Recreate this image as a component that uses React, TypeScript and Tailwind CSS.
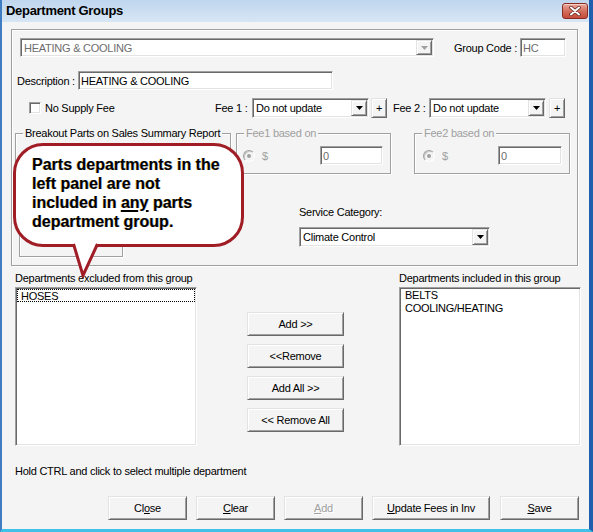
import React from 'react';

const sunken =
  'bg-white border border-t-[#a0a0a0] border-l-[#a0a0a0] border-b-white border-r-white shadow-[inset_1px_1px_0_#696969,inset_-1px_-1px_0_#e3e3e3]';
const raised =
  'bg-[#f4f4f4] border border-t-[#e3e3e3] border-l-[#e3e3e3] border-r-[#696969] border-b-[#696969] shadow-[inset_1px_1px_0_#fff,inset_-1px_-1px_0_#a0a0a0]';
const etched = 'border border-[#a0a0a0] shadow-[1px_1px_0_#fff,inset_1px_1px_0_#fff]';

function ArrowBtn({ disabled }: { disabled?: boolean }) {
  return (
    <div className={`w-[16px] h-full shrink-0 flex items-center justify-center ${raised}`}>
      <svg width="7" height="4" viewBox="0 0 7 4">
        <path d="M0 0h7L3.5 4z" fill={disabled ? '#a0a0a0' : '#000'} />
      </svg>
    </div>
  );
}

function Combo({ value, className, disabled }: { value: string; className: string; disabled?: boolean }) {
  return (
    <div className={`h-full flex p-px ${sunken} ${className}`}>
      <div className={`flex-1 pl-[2px] flex items-center whitespace-nowrap overflow-hidden ${disabled ? 'text-[#6d6d6d]' : 'text-black'}`}>
        {value}
      </div>
      <ArrowBtn disabled={disabled} />
    </div>
  );
}

function Field({ value, className, muted }: { value: string; className: string; muted?: boolean }) {
  return (
    <div className={`flex items-center pl-[2px] whitespace-nowrap ${sunken} ${className} ${muted ? 'text-[#6d6d6d]' : 'text-black'}`}>
      {value}
    </div>
  );
}

function Radio() {
  return (
    <div className="w-[12px] h-[12px] shrink-0 rounded-full border border-t-[#a0a0a0] border-l-[#a0a0a0] border-r-white border-b-white bg-[#f4f4f4] flex items-center justify-center shadow-[inset_1px_1px_0_#c8c8c8]">
      <div className="w-[4px] h-[4px] rounded-full bg-[#a0a0a0]" />
    </div>
  );
}

function GroupTitle({ children, gray }: { children: React.ReactNode; gray?: boolean }) {
  return (
    <span className={`absolute left-[7px] -top-[8px] px-[2px] bg-[#f4f4f4] whitespace-nowrap ${gray ? 'text-[#a0a0a0]' : 'text-black'}`}>
      {children}
    </span>
  );
}

function Btn({ children, className, disabled }: { children: React.ReactNode; className: string; disabled?: boolean }) {
  return (
    <div
      className={`h-[24px] flex items-center justify-center whitespace-nowrap ${raised} ${className} ${
        disabled ? 'text-[#a0a0a0] [text-shadow:1px_1px_0_#fff]' : 'text-black'
      }`}
    >
      {children}
    </div>
  );
}

function CloseBox() {
  return (
    <div className="w-[26px] h-[16px] rounded-[3px] border border-[#8b2b22] bg-gradient-to-b from-[#e9a99b] via-[#d46f5e] to-[#c44a3a] flex items-center justify-center shadow-[inset_0_1px_0_#f5cfc6]">
      <svg width="12" height="10" viewBox="0 0 12 10">
        <path d="M2 1.5l8 7M10 1.5l-8 7" stroke="#5a1d18" strokeWidth="3.4" strokeLinecap="round" />
        <path d="M2 1.5l8 7M10 1.5l-8 7" stroke="#fff" strokeWidth="2" strokeLinecap="round" />
      </svg>
    </div>
  );
}

export default function App() {
  return (
    <div className="relative w-[593px] h-[532px] overflow-hidden flex flex-col bg-[#f4f4f4] border-l-2 border-l-[#3f7cc2] border-r-[4px] border-r-[#1f5fae] border-b-[3px] border-b-[#3fc1ea] font-['Liberation_Sans',Arial,sans-serif] text-[11px] leading-[14px] tracking-[-0.25px] text-black">
      {/* title bar */}
      <div className="h-[22px] shrink-0 flex items-center justify-between pl-[4px] pr-[1px] bg-gradient-to-b from-[#bfd6ee] to-[#d7e6f5]">
        <span className="text-[13px] font-bold tracking-[-0.3px] text-black">Department Groups</span>
        <CloseBox />
      </div>

      {/* main frame */}
      <div className={`ml-[9px] mt-[7px] w-[567px] h-[237px] shrink-0 flex flex-col ${etched}`}>
        {/* row 1 */}
        <div className="mt-[8px] h-[19px] flex items-stretch">
          <Combo value="HEATING & COOLING" className="ml-[8px] w-[414px]" disabled />
          <div className="w-[86px] pr-[3px] flex items-center justify-end whitespace-nowrap">Group Code :</div>
          <Field value="HC" className="w-[46px]" muted />
        </div>

        {/* row 2 */}
        <div className="mt-[14px] h-[19px] flex items-stretch">
          <div className="ml-[5px] w-[61px] flex items-center whitespace-nowrap">Description :</div>
          <Field value="HEATING & COOLING" className="w-[255px]" />
        </div>

        {/* row 3 */}
        <div className="mt-[8px] h-[20px] flex items-stretch">
          <div className="w-[203px] flex items-center">
            <div className={`ml-[17px] w-[12px] h-[12px] ${sunken}`} />
            <span className="ml-[4px] whitespace-nowrap">No Supply Fee</span>
          </div>
          <div className="w-[37px] flex items-center whitespace-nowrap">Fee 1 :</div>
          <Combo value="Do not update" className="w-[117px]" />
          <Btn className="ml-[2px] w-[16px] !h-[20px]">+</Btn>
          <div className="ml-[6px] w-[36px] flex items-center whitespace-nowrap">Fee 2 :</div>
          <Combo value="Do not update" className="w-[117px]" />
          <Btn className="ml-[3px] w-[16px] !h-[20px]">+</Btn>
        </div>

        {/* row 4 */}
        <div className="mt-[15px] flex items-start">
          <div className="flex flex-col">
            <div className={`relative ml-[3px] w-[216px] h-[92px] ${etched}`}>
              <GroupTitle>Breakout Parts on Sales Summary Report</GroupTitle>
            </div>
            <div className={`ml-[7px] mt-[5px] w-[104px] h-[27px] ${etched}`} />
          </div>

          <div className="flex flex-col">
            <div className="flex">
              <div className={`relative ml-[5px] w-[155px] h-[41px] ${etched}`}>
                <GroupTitle gray>Fee1 based on</GroupTitle>
                <div className="mt-[12px] h-[19px] flex items-center">
                  <div className="ml-[6px]">
                    <Radio />
                  </div>
                  <span className="ml-[7px] text-[#a0a0a0]">$</span>
                  <Field value="0" className="ml-auto mr-[7px] w-[63px] h-[19px]" muted />
                </div>
              </div>
              <div className={`relative ml-[23px] w-[156px] h-[41px] ${etched}`}>
                <GroupTitle gray>Fee2 based on</GroupTitle>
                <div className="mt-[12px] h-[19px] flex items-center">
                  <div className="ml-[8px]">
                    <Radio />
                  </div>
                  <span className="ml-[7px] text-[#a0a0a0]">$</span>
                  <Field value="0" className="ml-auto mr-[7px] w-[64px] h-[19px]" muted />
                </div>
              </div>
            </div>
            <div className="ml-[68px] mt-[31px] h-[14px] whitespace-nowrap">Service Category:</div>
            <div className="ml-[68px] mt-[8px] h-[20px] flex">
              <Combo value="Climate Control" className="w-[191px]" />
            </div>
          </div>
        </div>
      </div>

      {/* lists */}
      <div className="mt-[5px] flex items-start">
        <div className="ml-[13px] w-[182px] flex flex-col">
          <div className="h-[14px] whitespace-nowrap">Departments excluded from this group</div>
          <div className={`mt-[2px] h-[159px] p-[1px] ${sunken}`}>
            <div className="h-[13px] leading-[12px] pl-[3px] border border-dotted border-black whitespace-nowrap">HOSES</div>
          </div>
        </div>

        <div className="ml-[50px] pt-[41px] w-[97px] flex flex-col gap-[8px]">
          <Btn className="w-[97px]">Add &gt;&gt;</Btn>
          <Btn className="w-[97px]">&lt;&lt;Remove</Btn>
          <Btn className="w-[97px]">Add All &gt;&gt;</Btn>
          <Btn className="w-[97px]">&lt;&lt; Remove All</Btn>
        </div>

        <div className="ml-[55px] w-[182px] flex flex-col">
          <div className="h-[14px] whitespace-nowrap">Departments included in this group</div>
          <div className={`mt-[2px] h-[159px] p-[1px] ${sunken}`}>
            <div className="h-[13px] leading-[13px] pl-[4px] whitespace-nowrap">BELTS</div>
            <div className="h-[13px] leading-[13px] pl-[4px] whitespace-nowrap">COOLING/HEATING</div>
          </div>
        </div>
      </div>

      <div className="ml-[13px] mt-[18px] h-[14px] whitespace-nowrap">Hold CTRL and click to select multiple department</div>

      {/* bottom buttons */}
      <div className="mt-[18px] flex">
        <Btn className="ml-[106px] w-[79px]">
          Cl<u>o</u>se
        </Btn>
        <Btn className="ml-[9px] w-[79px]">
          <u>C</u>lear
        </Btn>
        <Btn className="ml-[9px] w-[79px]" disabled>
          <u>A</u>dd
        </Btn>
        <Btn className="ml-[9px] w-[118px]">
          <u>U</u>pdate Fees in Inv
        </Btn>
        <Btn className="ml-[10px] w-[79px]">
          <u>S</u>ave
        </Btn>
      </div>

      {/* callout */}
      <div className="absolute left-[11px] top-[143px] w-[231px] h-[104px] rounded-[30px] border-[3px] border-[#a01d25] bg-white pl-[16px] pt-[9px] text-[16px] leading-[19px] font-bold tracking-normal text-black [text-shadow:-0.6px_0_0_rgba(234,179,8,0.55),0.6px_0_0_rgba(37,99,235,0.45)]">
        Parts departments in the
        <br />
        left panel are not
        <br />
        included in <u className="decoration-[1.5px] underline-offset-2">any</u> parts
        <br />
        department group.
      </div>
      <svg className="absolute left-[66px] top-[238px]" width="34" height="40" viewBox="0 0 34 40">
        <polygon points="6,4 29,4 15,36" fill="#fff" />
        <polyline points="5.5,6 15,37.5 29.5,6" fill="none" stroke="#a01d25" strokeWidth="3" strokeLinejoin="miter" />
      </svg>
    </div>
  );
}
